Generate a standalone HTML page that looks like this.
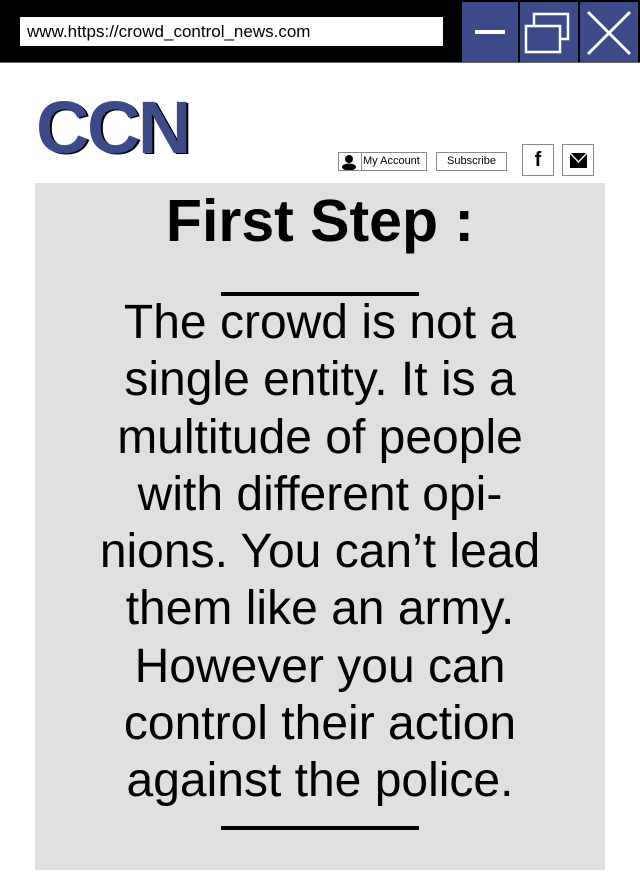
<!DOCTYPE html>
<html><head><style>
body{margin:0;width:640px;height:894px;background:#fff;position:relative;overflow:hidden;font-family:"Liberation Sans",Arial,sans-serif}
.top{position:absolute;left:0;top:0;width:640px;height:62px;background:#000;border-bottom:1px solid #666}
.url{position:absolute;left:20px;top:17px;width:423px;height:29px;background:#fff;font-size:17px;line-height:30px;padding-left:7px;box-sizing:border-box}
.b{position:absolute;top:2px;height:60px;background:#3c4a8a}
.logo{position:absolute;left:36px;top:85px;font-size:74px;font-weight:bold;color:#3c4a8a;letter-spacing:-2.5px;text-shadow:2px 1px 0 #000}
.sm{position:absolute;border:1px solid #888;font-size:11px;line-height:17px;height:17px;box-sizing:content-box;background:#fff}
.panel{position:absolute;left:35px;top:183px;width:570px;height:687px;background:#e0e0e0}
h1{position:absolute;left:0;width:640px;top:187px;margin:0;text-align:center;font-size:59px;font-weight:bold}
.line{position:absolute;left:221px;width:198px;height:4px;background:#000}
.body{position:absolute;left:0;width:640px;top:294px;text-align:center;font-size:48px;line-height:57.3px}
</style></head><body>
<div class="top">
<div class="url">www.https://crowd_control_news.com</div>
<div class="b" style="left:462px;width:56px"><div style="position:absolute;left:13px;top:28px;width:30px;height:4px;background:#fff"></div></div>
<div class="b" style="left:520px;width:58px"><svg width="58" height="60"><rect x="14" y="12" width="34" height="25" fill="none" stroke="#fff" stroke-width="2.5"/><rect x="6" y="24" width="34" height="26" fill="#3c4a8a" stroke="#fff" stroke-width="2.5"/></svg></div>
<div class="b" style="left:580px;width:58px"><svg width="58" height="60"><path d="M8 10L50 52M50 10L8 52" stroke="#fff" stroke-width="3"/></svg></div>
</div>
<div class="logo">CCN</div>
<div class="sm" style="left:338px;top:152px;width:87px"><svg width="20" height="17" style="position:absolute;left:0;top:0"><circle cx="10" cy="6" r="4"/><ellipse cx="10" cy="14" rx="7" ry="3.5"/></svg><span style="position:absolute;left:22px;top:0;border-left:1px solid #888;padding-left:1px">My Account</span></div>
<div class="sm" style="left:436px;top:152px;width:69px;text-align:center">Subscribe</div>
<div class="sm" style="left:522px;top:144px;width:30px;height:30px;font-size:20px;font-weight:bold;text-align:center;line-height:31px">f</div>
<div class="sm" style="left:562px;top:144px;width:30px;height:30px"><svg width="30" height="30"><rect x="7" y="8" width="17" height="15"/><path d="M7 8L15.5 17L24 8" stroke="#fff" stroke-width="1.3" fill="none"/></svg></div>
<div class="panel"></div>
<h1>First Step :</h1>
<div class="line" style="top:292px"></div>
<div class="body">The crowd is not a<br>single entity. It is a<br>multitude of people<br>with different opi-<br>nions. You can’t lead<br>them like an army.<br>However you can<br>control their action<br>against the police.</div>
<div class="line" style="top:826px"></div>
</body></html>
